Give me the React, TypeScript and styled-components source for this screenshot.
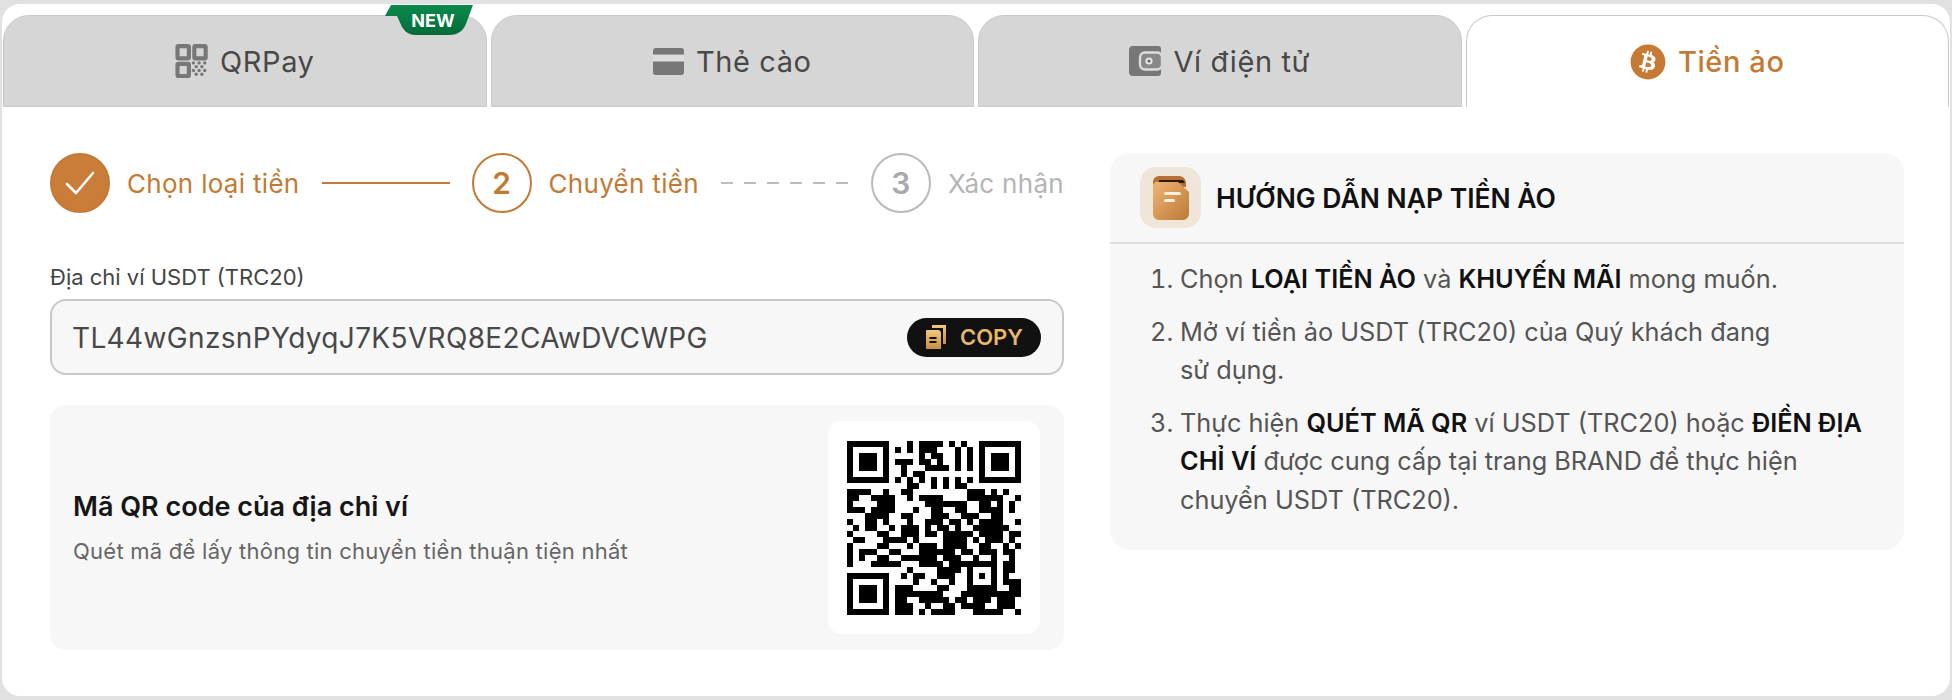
import React from "react";
import styled, { createGlobalStyle } from "styled-components";
import { FaBitcoin } from "react-icons/fa";

const Global = createGlobalStyle`
  html, body { margin: 0; padding: 0; background: #e1e1e1; }
  body { font-family: "Inter", "Noto Sans", sans-serif; }
  * { box-sizing: border-box; }
`;

const Frame = styled.div`
  width: 1952px;
  height: 700px;
  padding: 4px 2px;
`;
const Card = styled.main`
  position: relative;
  height: 692px;
  background: #fff;
  border-radius: 18px;
  padding-top: 11px;
`;
const Tabs = styled.nav`
  display: flex;
  gap: 4px;
  padding: 0 1px;
`;
const Tab = styled.div<{ $active?: boolean }>`
  flex: 1;
  height: 92px;
  display: flex;
  align-items: center;
  justify-content: center;
  gap: 12px;
  border-radius: 26px 26px 0 0;
  background: ${(p) => (p.$active ? "#fff" : "#d6d6d6")};
  border: 1px solid #c9c9c9;
  border-bottom: ${(p) => (p.$active ? "none" : "1px solid #c9c9c9")};
  color: ${(p) => (p.$active ? "#c27a35" : "#484848")};
  font-size: 29px;
  font-weight: ${(p) => (p.$active ? 500 : 400)};
  letter-spacing: 0.6px;
`;
const NewBadge = styled.div`
  position: absolute;
  left: 383px;
  top: 1px;
  width: 88px;
  height: 30px;
  display: flex;
  align-items: center;
  justify-content: center;
  padding-left: 8px;
  color: #fff;
  font-size: 18px;
  font-weight: 700;
  background: linear-gradient(180deg, #0a8a4c, #056a39);
  clip-path: path("M6 0H88L82 16Q78 30 64 30H30Q22 30 17 22L12 11H0Z");
`;
const Content = styled.div`
  display: grid;
  grid-template-columns: 1014px 794px;
  column-gap: 46px;
  padding: 46px 0 0 48px;
  align-items: start;
`;
const Left = styled.section`
  display: flex;
  flex-direction: column;
`;
const Stepper = styled.div`
  display: flex;
  align-items: center;
  gap: 22px;
  height: 60px;
`;
const Step = styled.div`
  display: flex;
  align-items: center;
  gap: 17px;
`;
const Bullet = styled.div<{ $state: "done" | "current" | "todo" }>`
  width: 60px;
  height: 60px;
  border-radius: 50%;
  display: flex;
  align-items: center;
  justify-content: center;
  font-size: 30px;
  font-weight: 600;
  color: ${(p) => (p.$state === "todo" ? "#aaa" : "#c27a35")};
  border: 2px solid ${(p) => (p.$state === "todo" ? "#b9b9b9" : "#c27a35")};
  background: ${(p) => (p.$state === "done" ? "#c97d38" : "transparent")};
`;
const StepLabel = styled.span<{ $muted?: boolean }>`
  font-size: 26px;
  letter-spacing: 0.3px;
  white-space: nowrap;
  color: ${(p) => (p.$muted ? "#b4b4b4" : "#c27a35")};
`;
const Connector = styled.div<{ $dashed?: boolean }>`
  flex: 1;
  height: 2px;
  background: ${(p) =>
    p.$dashed
      ? "repeating-linear-gradient(90deg, #bdbdbd 0 12px, transparent 12px 23px)"
      : "#c27a35"};
`;
const FieldLabel = styled.label`
  margin-top: 50px;
  font-size: 22px;
  line-height: 28px;
  color: #444;
`;
const AddressBox = styled.div`
  margin-top: 8px;
  height: 76px;
  display: flex;
  align-items: center;
  justify-content: space-between;
  padding: 0 21px 0 20px;
  background: #f7f7f7;
  border: 2px solid #c8c8c8;
  border-radius: 16px;
`;
const Address = styled.span`
  font-size: 28px;
  line-height: 36px;
  padding-top: 1px;
  color: #484848;
  letter-spacing: 0.35px;
`;
const CopyButton = styled.button`
  width: 134px;
  height: 39px;
  display: flex;
  align-items: center;
  justify-content: center;
  gap: 13px;
  border: 0;
  border-radius: 20px;
  background: #111;
  color: #e6b76c;
  font-family: inherit;
  font-size: 22px;
  font-weight: 600;
`;
const QrPanel = styled.div`
  margin-top: 30px;
  height: 245px;
  display: flex;
  align-items: center;
  justify-content: space-between;
  padding: 0 24px 0 23px;
  background: #f7f7f7;
  border-radius: 16px;
`;
const QrTitle = styled.div`
  font-size: 27px;
  font-weight: 600;
  line-height: 34px;
  color: #161616;
`;
const QrSub = styled.div`
  margin-top: 13px;
  font-size: 22px;
  line-height: 28px;
  letter-spacing: 0.25px;
  color: #666;
`;
const QrCard = styled.div`
  width: 212px;
  height: 213px;
  display: flex;
  align-items: center;
  justify-content: center;
  background: #fff;
  border-radius: 14px;
`;
const Guide = styled.aside`
  height: 397px;
  background: #f7f7f7;
  border-radius: 20px;
`;
const GuideHead = styled.header`
  height: 91px;
  display: flex;
  align-items: center;
  gap: 15px;
  padding-left: 30px;
  border-bottom: 2px solid #dedede;
`;
const GuideIcon = styled.div`
  width: 61px;
  height: 61px;
  display: flex;
  align-items: center;
  justify-content: center;
  border-radius: 16px;
  background: #efe5d8;
`;
const GuideTitle = styled.h2`
  margin: 0;
  font-size: 26.5px;
  font-weight: 600;
  color: #111;
`;
const Steps = styled.ol`
  margin: 0;
  padding: 16px 30px 0 70px;
  list-style: decimal;
  color: #555;
  font-size: 25.3px;
  line-height: 38.5px;
`;
const StepItem = styled.li`
  margin-bottom: 14px;
  &::marker { color: #555; }
`;
const Strong = styled.b`
  font-weight: 600;
  color: #111;
`;

const finderTop = ["1111111", "1000001", "1011101", "1011101", "1011101", "1000001", "1111111"];
const topMid = [
  "000101111010100",
  "010101110001010",
  "000001011001010",
  "011101101001010",
  "001000111101010",
  "001011000000000",
  "010101010101010",
];
const midRows = [
  "00000000001100101011000000000",
  "11110010011000000000111010100",
  "11001111001011110000111111001",
  "10000111000001111111001101010",
  "11101111000100110011001111010",
  "00011110011000111001110011000",
  "10011010001001110110101111001",
  "01011001011101011010011111100",
  "10000110011101101111101111011",
  "01100011110100001111010111010",
  "10000110001011101111001100101",
  "10111001100011111101101110110",
  "10100110011111101110010010010",
  "10001111100011110111111110110",
  "00000000001000011110100010110",
];
const botRows = [
  "11111110" + "010110011100101010100",
  "10000010" + "000100100100100010111",
  "10111010" + "111000011000111110011",
  "10111010" + "111111110001111111111",
  "10111010" + "110011111011011101110",
  "10000010" + "111001001101111001110",
  "11111110" + "111010111100011111001",
];
const grid = [
  ...topMid.map((m, i) => finderTop[i] + m + finderTop[i]),
  ...midRows,
  ...botRows,
];
const qrPath = grid
  .flatMap((r, y) => r.split("").map((c, x) => (c === "1" ? `M${x} ${y}h1v1h-1z` : "")))
  .join("");

const QrCode = () => (
  <svg width={174} height={174} viewBox="0 0 29 29" shapeRendering="crispEdges">
    <path d={qrPath} fill="#000" />
  </svg>
);

const QrTabIcon = () => (
  <svg width={33} height={34} viewBox="0 0 34 36" fill="none">
    <g stroke="#777" strokeWidth="4.4">
      <rect x="2.2" y="2.2" width="12" height="13" rx="1" />
      <rect x="20" y="2.2" width="12" height="13" rx="1" />
      <rect x="2.2" y="21" width="12" height="13" rx="1" />
    </g>
    <g fill="#777">
      {[[19, 20], [25, 20], [31, 20], [22, 24], [28, 24], [19, 28], [25, 28], [31, 28], [22, 32], [28, 32]].map(([x, y]) => (
        <circle key={`${x}-${y}`} cx={x} cy={y} r="1.8" />
      ))}
    </g>
  </svg>
);
const CardIcon = () => (
  <svg width={31} height={27} viewBox="0 0 34 28" preserveAspectRatio="none">
    <path d="M3 0h28a3 3 0 0 1 3 3v4H0V3a3 3 0 0 1 3-3z" fill="#777" />
    <rect y="7" width="34" height="7" fill="#ddd" />
    <path d="M0 14h34v11a3 3 0 0 1-3 3H3a3 3 0 0 1-3-3z" fill="#777" />
  </svg>
);
const WalletIcon = () => (
  <svg width={32} height={30} viewBox="0 0 32 30">
    <path d="M4 0h25a3 3 0 0 1 3 3v24a3 3 0 0 1-3 3H4a4 4 0 0 1-4-4V4a4 4 0 0 1 4-4z" fill="#777" />
    <rect x="11" y="6.5" width="22" height="17" rx="5" fill="#888" stroke="#dcdcdc" strokeWidth="2.4" />
    <circle cx="20" cy="15" r="3.6" fill="#e6e6e6" />
    <circle cx="20" cy="15" r="1.6" fill="#666" />
  </svg>
);
const CheckIcon = () => (
  <svg width={32} height={28} viewBox="0 0 32 28" fill="none">
    <path d="M3 15l9 9L29 4" stroke="#fff" strokeWidth="2.6" strokeLinecap="round" strokeLinejoin="round" />
  </svg>
);
const CopyIcon = () => (
  <svg width={22} height={26} viewBox="0 0 22 26">
    <defs>
      <linearGradient id="gold" x1="0" y1="0" x2="0" y2="1">
        <stop offset="0" stopColor="#f0c67f" />
        <stop offset="1" stopColor="#c78f45" />
      </linearGradient>
    </defs>
    <path d="M7 1h14v19h-3V4H7z" fill="url(#gold)" />
    <path d="M2 6h12l2 2v17H2a1 1 0 0 1-1-1V7a1 1 0 0 1 1-1z" fill="url(#gold)" />
    <rect x="4.5" y="13" width="7" height="2" fill="#111" />
    <rect x="4.5" y="17" width="7" height="2" fill="#111" />
  </svg>
);
const BookIcon = () => (
  <svg width={36} height={44} viewBox="0 0 36 44">
    <defs>
      <linearGradient id="book" x1="0" y1="0" x2="1" y2="1">
        <stop offset="0" stopColor="#eeb474" />
        <stop offset="1" stopColor="#bc7a38" />
      </linearGradient>
    </defs>
    <path d="M6 0h20a7 7 0 0 1 7 7v4H0V6a6 6 0 0 1 6-6z" fill="#b86f33" />
    <path d="M6 4h24l2 3H6z" fill="#2a1c10" />
    <path d="M5 6h20l11 10v22a6 6 0 0 1-6 6H6a6 6 0 0 1-6-6V10a4 4 0 0 1 5-4z" fill="url(#book)" />
    <rect x="11" y="16" width="17" height="3" rx="1.5" fill="#fbeedd" />
    <rect x="11" y="23" width="11" height="3" rx="1.5" fill="#fbeedd" />
  </svg>
);

export default function App() {
  return (
    <Frame>
      <Global />
      <Card>
        <NewBadge>NEW</NewBadge>
        <Tabs>
          <Tab><QrTabIcon />QRPay</Tab>
          <Tab><CardIcon />Thẻ cào</Tab>
          <Tab><WalletIcon />Ví điện tử</Tab>
          <Tab $active><FaBitcoin size={36} color="#c67a33" />Tiền ảo</Tab>
        </Tabs>
        <Content>
          <Left>
            <Stepper>
              <Step>
                <Bullet $state="done"><CheckIcon /></Bullet>
                <StepLabel>Chọn loại tiền</StepLabel>
              </Step>
              <Connector />
              <Step>
                <Bullet $state="current">2</Bullet>
                <StepLabel>Chuyển tiền</StepLabel>
              </Step>
              <Connector $dashed />
              <Step>
                <Bullet $state="todo">3</Bullet>
                <StepLabel $muted>Xác nhận</StepLabel>
              </Step>
            </Stepper>
            <FieldLabel>Địa chỉ ví USDT (TRC20)</FieldLabel>
            <AddressBox>
              <Address>TL44wGnzsnPYdyqJ7K5VRQ8E2CAwDVCWPG</Address>
              <CopyButton><CopyIcon />COPY</CopyButton>
            </AddressBox>
            <QrPanel>
              <div>
                <QrTitle>Mã QR code của địa chỉ ví</QrTitle>
                <QrSub>Quét mã để lấy thông tin chuyển tiền thuận tiện nhất</QrSub>
              </div>
              <QrCard><QrCode /></QrCard>
            </QrPanel>
          </Left>
          <Guide>
            <GuideHead>
              <GuideIcon><BookIcon /></GuideIcon>
              <GuideTitle>HƯỚNG DẪN NẠP TIỀN ẢO</GuideTitle>
            </GuideHead>
            <Steps>
              <StepItem>Chọn <Strong>LOẠI TIỀN ẢO</Strong> và <Strong>KHUYẾN MÃI</Strong> mong muốn.</StepItem>
              <StepItem>Mở ví tiền ảo USDT (TRC20) của Quý khách đang<br />sử dụng.</StepItem>
              <StepItem>Thực hiện <Strong>QUÉT MÃ QR</Strong> ví USDT (TRC20) hoặc <Strong>ĐIỀN ĐỊA CHỈ VÍ</Strong> được cung cấp tại trang BRAND để thực hiện chuyển USDT (TRC20).</StepItem>
            </Steps>
          </Guide>
        </Content>
      </Card>
    </Frame>
  );
}
